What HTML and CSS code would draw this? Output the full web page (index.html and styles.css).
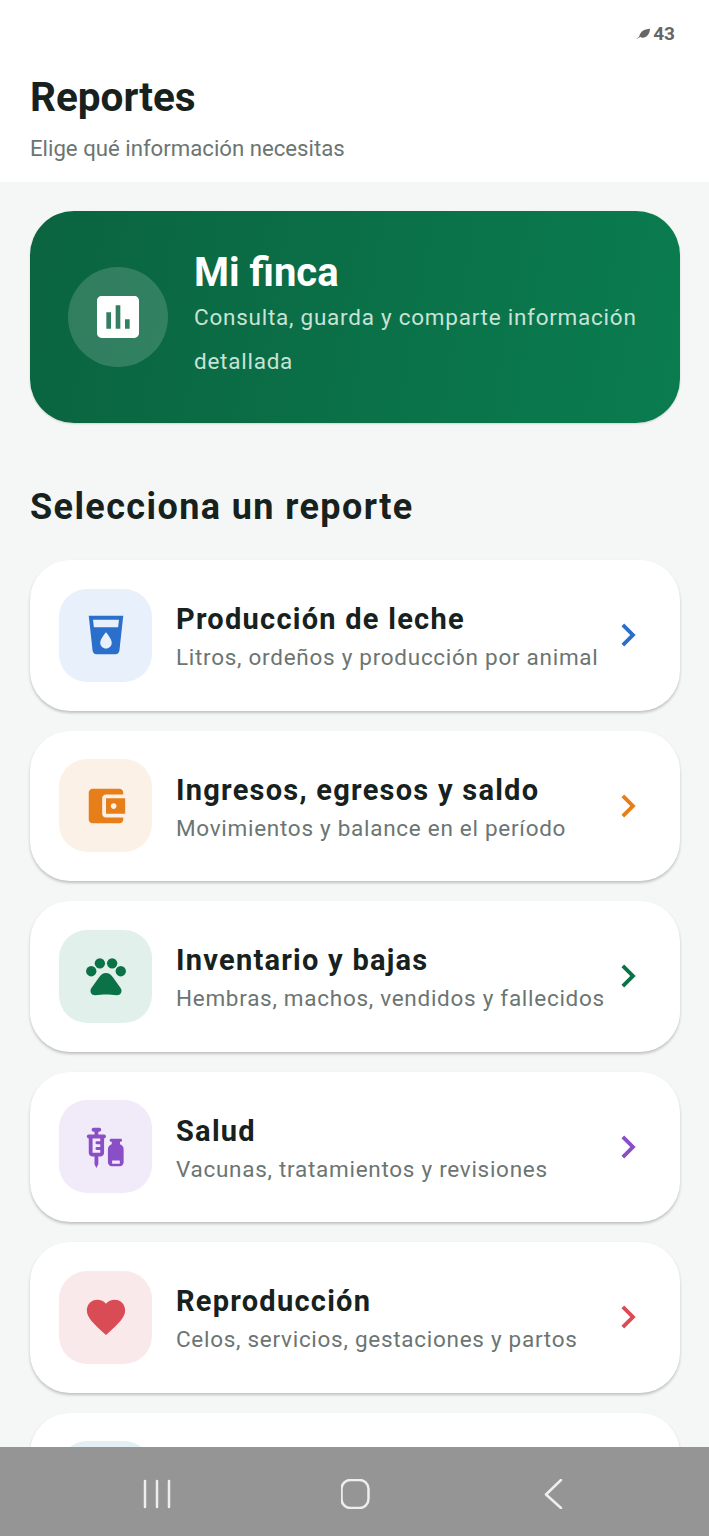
FILE: index.html
```html
<!DOCTYPE html>
<html lang="es">
<head>
    <meta charset="UTF-8">
    <meta name="viewport" content="width=device-width, initial-scale=1.0">
    <title>Reportes</title>
    <link rel="stylesheet" href="styles.css">
</head>
<body>
    <div class="app">
        <header class="header">
            <div class="status">
                <svg class="status-leaf" viewBox="0 0 14 10"><path d="M0 9.800C2 9.500 3 8.800 3.500 7 4.500 3 8 .8 14 .2 13.800 5 11 9.200 6.500 9.200 5.500 9.200 4.800 8.800 4.200 8.300 3 9.500 1.500 10.200 0 9.800z"/></svg>
                <span>43</span>
            </div>
            <h1>Reportes</h1>
            <p>Elige qué información necesitas</p>
        </header>

        <main class="content">
            <section class="hero">
                <div class="hero-icon">
                    <svg viewBox="0 0 24 24"><path d="M19 3H5c-1.100 0-2 .9-2 2v14c0 1.100.9 2 2 2h14c1.100 0 2-.9 2-2V5c0-1.100-.9-2-2-2zM9 17H7v-7h2v7zm4 0h-2V7h2v10zm4 0h-2v-4h2v4z"/></svg>
                </div>
                <div class="hero-text">
                    <h2>Mi finca</h2>
                    <p>Consulta, guarda y comparte información detallada</p>
                </div>
            </section>

            <h2 class="section-title">Selecciona un reporte</h2>

            <div class="report-list">
                <div class="report blue">
                    <div class="tile">
                        <svg viewBox="0 0 24 24"><path d="M3 2l2.010 18.230C5.130 21.230 5.970 22 7 22h10c1.030 0 1.870-.77 1.990-1.770L21 2H3zm9 17c-1.660 0-3-1.340-3-3 0-2 3-5.400 3-5.400s3 3.400 3 5.400c0 1.660-1.340 3-3 3zm6.330-11H5.670l-.44-4h13.530l-.43 4z"/></svg>
                    </div>
                    <div class="report-text">
                        <h3>Producción de leche</h3>
                        <p>Litros, ordeños y producción por animal</p>
                    </div>
                    <svg class="chevron" viewBox="0 0 24 24"><path d="M10 6L8.590 7.410 13.170 12l-4.580 4.590L10 18l6-6z"/></svg>
                </div>

                <div class="report orange">
                    <div class="tile">
                        <svg viewBox="0 0 24 24"><path d="M21 18v1c0 1.100-.9 2-2 2H5c-1.110 0-2-.9-2-2V5c0-1.100.89-2 2-2h14c1.100 0 2 .9 2 2v1h-9c-1.110 0-2 .9-2 2v8c0 1.100.89 2 2 2h9zm-9-2h10V8H12v8zm4-2.500c-.83 0-1.500-.67-1.500-1.500s.67-1.500 1.500-1.500 1.500.67 1.500 1.500-.67 1.500-1.500 1.500z"/></svg>
                    </div>
                    <div class="report-text">
                        <h3>Ingresos, egresos y saldo</h3>
                        <p>Movimientos y balance en el período</p>
                    </div>
                    <svg class="chevron" viewBox="0 0 24 24"><path d="M10 6L8.590 7.410 13.170 12l-4.580 4.590L10 18l6-6z"/></svg>
                </div>

                <div class="report green">
                    <div class="tile">
                        <svg viewBox="0 0 24 24">
                            <circle cx="4.300" cy="9.500" r="2.700"/>
                            <circle cx="8.800" cy="5.400" r="2.700"/>
                            <circle cx="15.200" cy="5.400" r="2.700"/>
                            <circle cx="19.700" cy="9.500" r="2.700"/>
                            <path d="M12 10.400c-1.600 0-2.800 1-3.700 2.400l-3.900 5.400C3.200 20 4.300 22 6.400 22c2 0 3.600-.3 5.600-.3s3.600.3 5.600.3c2.100 0 3.200-2 2-3.800l-3.900-5.400c-.9-1.400-2.100-2.400-3.700-2.400z"/>
                        </svg>
                    </div>
                    <div class="report-text">
                        <h3>Inventario y bajas</h3>
                        <p>Hembras, machos, vendidos y fallecidos</p>
                    </div>
                    <svg class="chevron" viewBox="0 0 24 24"><path d="M10 6L8.590 7.410 13.170 12l-4.580 4.590L10 18l6-6z"/></svg>
                </div>

                <div class="report purple">
                    <div class="tile">
                        <svg viewBox="0 0 24 24">
                            <path fill-rule="evenodd" d="M11 5.500H8V4h.5c.55 0 1-.45 1-1s-.45-1-1-1h-3c-.55 0-1 .45-1 1s.45 1 1 1H6v1.500H3c-.55 0-1 .45-1 1s.45 1 1 1V15c0 1.100.9 2 2 2h1v4l1 2 1-2v-4h1c1.100 0 2-.9 2-2V7.500c.55 0 1-.45 1-1s-.45-1-1-1zM9 9H7.250c-.41 0-.75.34-.75.75s.34.75.75.75H9V12H7.250c-.41 0-.75.34-.75.75s.34.75.75.75H9V15H5V7.500h4V9z"/>
                            <path fill-rule="evenodd" d="M15 9.300h-.3c-.45 0-.8-.35-.8-.8s.35-.8.8-.8h4.900c.45 0 .8.350.8.8s-.35.8-.8.8h-.3v1.300c1.200.5 1.900 1.400 1.900 2.600V20c0 1.200-.9 2.100-2 2.100H15c-1.100 0-2-.9-2-2.100v-6.800c0-1.200.7-2.100 2-2.600V9.300zM15.200 19.100v1.700h4v-1.700z"/>
                        </svg>
                    </div>
                    <div class="report-text">
                        <h3>Salud</h3>
                        <p>Vacunas, tratamientos y revisiones</p>
                    </div>
                    <svg class="chevron" viewBox="0 0 24 24"><path d="M10 6L8.590 7.410 13.170 12l-4.580 4.590L10 18l6-6z"/></svg>
                </div>

                <div class="report red">
                    <div class="tile">
                        <svg viewBox="0 0 24 24"><path d="M12 21.350l-1.450-1.320C5.400 15.360 2 12.280 2 8.500 2 5.420 4.420 3 7.500 3c1.740 0 3.410.81 4.500 2.090C13.090 3.810 14.760 3 16.500 3 19.580 3 22 5.420 22 8.500c0 3.780-3.400 6.860-8.550 11.540L12 21.350z"/></svg>
                    </div>
                    <div class="report-text">
                        <h3>Reproducción</h3>
                        <p>Celos, servicios, gestaciones y partos</p>
                    </div>
                    <svg class="chevron" viewBox="0 0 24 24"><path d="M10 6L8.590 7.410 13.170 12l-4.580 4.590L10 18l6-6z"/></svg>
                </div>

                <div class="report teal">
                    <div class="tile"></div>
                </div>
            </div>
        </main>

        <nav class="navbar">
            <svg viewBox="0 0 30 30"><path d="M3 2v26M15 2v26M27 2v26"/></svg>
            <svg viewBox="0 0 30 30"><rect x="0.500" y="1" width="27" height="28" rx="9"/></svg>
            <svg viewBox="0 0 30 30"><path d="M22 1L7 15.500 22 29"/></svg>
        </nav>
    </div>
</body>
</html>
```

FILE: styles.css
```css
* {
    box-sizing: border-box;
}
html, body {
    margin: 0;
    height: 100%;
}
body {
    font-family: Roboto, "Liberation Sans", sans-serif;
    background-color: #f5f7f6;
    color: #17211d;
}
h1, h2, h3, p {
    margin: 0;
}
.app {
    display: flex;
    flex-direction: column;
    height: 1536px;
    overflow: hidden;
}

.header {
    flex-shrink: 0;
    height: 182px;
    padding: 22px 30px 0;
    background-color: #fff;
}
.status {
    display: flex;
    justify-content: flex-end;
    align-items: center;
    gap: 3px;
    height: 22px;
    padding-right: 4px;
    font-size: 19px;
    font-weight: 700;
    color: #666;
}
.status-leaf {
    width: 14px;
    height: 11px;
    fill: #666;
}
.header h1 {
    margin-top: 29px;
    font-size: 40.500px;
    line-height: 48px;
    font-weight: 700;
}
.header p {
    margin-top: 12px;
    font-size: 22.200px;
    line-height: 30px;
    color: #6b7572;
}

.content {
    flex: 1;
    min-height: 0;
    overflow: hidden;
    padding: 29px 29px 0 30px;
}

.hero {
    display: flex;
    align-items: center;
    gap: 26px;
    height: 212px;
    padding: 0 24px 2px 38px;
    border-radius: 44px;
    background: linear-gradient(100deg, #0a6440, #0a7c50);
    box-shadow: 0 1px 2px rgba(0, 0, 0, 0.15);
}
.hero-icon {
    display: flex;
    justify-content: center;
    align-items: center;
    flex-shrink: 0;
    width: 100px;
    height: 100px;
    margin-bottom: -2px;
    border-radius: 50%;
    background-color: rgba(255, 255, 255, 0.16);
}
.hero-icon svg {
    width: 56px;
    height: 56px;
    fill: #fff;
}
.hero-text h2 {
    font-size: 40px;
    line-height: 46px;
    font-weight: 700;
    color: #fff;
}
.hero-text p {
    margin-top: -1px;
    font-size: 22.500px;
    line-height: 44px;
    letter-spacing: 0.750px;
    color: #c8e3d6;
}

.section-title {
    margin: 61px 0 30px;
    font-size: 36px;
    line-height: 46px;
    font-weight: 700;
    letter-spacing: 1.400px;
}

.report-list {
    display: flex;
    flex-direction: column;
    gap: 20px;
}
.report {
    display: flex;
    flex-shrink: 0;
    align-items: center;
    gap: 24px;
    height: 150.500px;
    padding: 0 29px 0 29px;
    border-radius: 40px;
    background-color: #fff;
    box-shadow: 0 2px 3px rgba(0, 0, 0, 0.22);
}
.tile {
    display: flex;
    justify-content: center;
    align-items: center;
    flex-shrink: 0;
    width: 93px;
    height: 93px;
    border-radius: 28px;
}
.tile svg {
    width: 46px;
    height: 46px;
    fill: currentColor;
}
.report-text {
    flex: 1;
    min-width: 0;
    padding-top: 6px;
}
.report-text h3 {
    font-size: 29px;
    line-height: 38px;
    font-weight: 700;
    letter-spacing: 1.250px;
}
.report-text p {
    font-size: 22.500px;
    line-height: 38px;
    letter-spacing: 0.720px;
    white-space: nowrap;
    color: #6b7572;
}
.chevron {
    flex-shrink: 0;
    width: 46px;
    height: 46px;
    fill: currentColor;
}

.blue { color: #2a6fcb; }
.blue .tile { background-color: #e8f0fb; }
.orange { color: #e67e1a; }
.orange .tile { background-color: #fcf1e6; }
.green { color: #0b7248; }
.green .tile { background-color: #e2f0eb; }
.purple { color: #8a4fc7; }
.purple .tile { background-color: #f1eaf8; }
.red { color: #d94b55; }
.red .tile { background-color: #f9e9eb; }
.teal .tile { background-color: #e3eff3; }
.report h3 { color: #17211d; }

.navbar {
    display: flex;
    flex-shrink: 0;
    justify-content: space-between;
    align-items: center;
    height: 89px;
    padding: 5px 140px 0 142px;
    background-color: #959595;
}
.navbar svg {
    width: 30px;
    height: 30px;
    fill: none;
    stroke: #eee;
    stroke-width: 2.500;
    stroke-linecap: round;
    stroke-linejoin: round;
}
```
